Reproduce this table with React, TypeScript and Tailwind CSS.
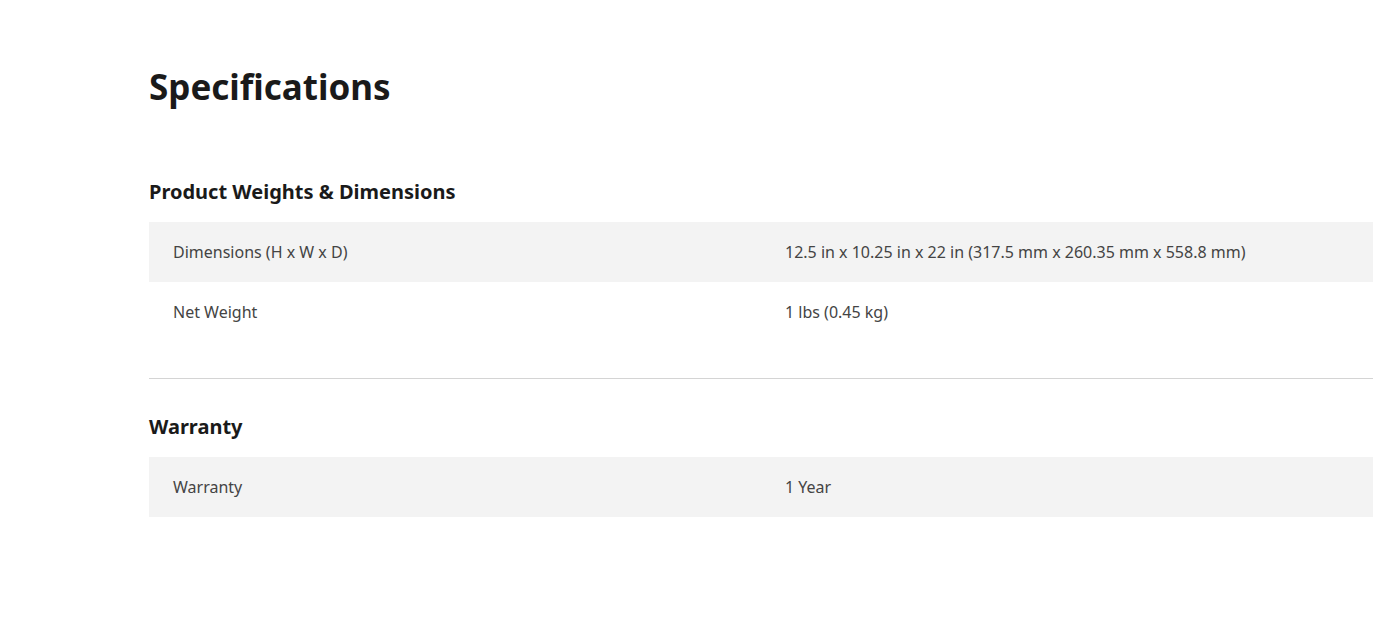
import React from "react";

type Spec = { label: string; value: string };

const sections: { title: string; rows: Spec[] }[] = [
  {
    title: "Product Weights & Dimensions",
    rows: [
      {
        label: "Dimensions (H x W x D)",
        value: "12.5 in x 10.25 in x 22 in (317.5 mm x 260.35 mm x 558.8 mm)",
      },
      { label: "Net Weight", value: "1 lbs (0.45 kg)" },
    ],
  },
  {
    title: "Warranty",
    rows: [{ label: "Warranty", value: "1 Year" }],
  },
];

const SpecRow: React.FC<{ spec: Spec; shaded: boolean }> = ({ spec, shaded }) => (
  <div
    className={`grid grid-cols-2 h-[60px] items-center text-base text-[#444444] ${
      shaded ? "bg-[#f3f3f3]" : "bg-white"
    }`}
  >
    <div className="px-6">{spec.label}</div>
    <div className="px-6">{spec.value}</div>
  </div>
);

export default function App() {
  return (
    <div
      className="min-h-screen bg-white"
      style={{ fontFamily: '"Noto Sans", "Open Sans", sans-serif' }}
    >
      <div className="ml-[149px] w-[1224px] pt-[62px]">
        <h1 className="text-[35px] leading-[50px] font-bold text-[#1a1a1a]">
          Specifications
        </h1>

        <div className="mt-[66px]">
          {sections.map((section, si) => (
            <div
              key={section.title}
              className={si > 0 ? "border-t border-[#d4d4d4] pt-[34px]" : ""}
            >
              <h2 className="text-[20px] leading-[28px] font-bold text-[#1a1a1a] mb-[16px]">
                {section.title}
              </h2>
              <div className={si < sections.length - 1 ? "mb-[36px]" : ""}>
                {section.rows.map((row, ri) => (
                  <SpecRow key={row.label} spec={row} shaded={ri % 2 === 0} />
                ))}
              </div>
            </div>
          ))}
        </div>
      </div>
    </div>
  );
}
